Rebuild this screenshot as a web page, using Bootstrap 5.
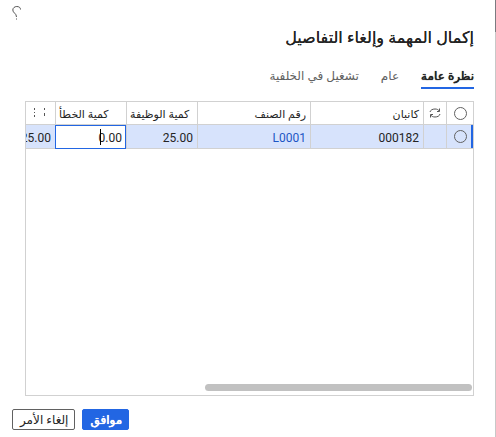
<!DOCTYPE html>
<html lang="ar" dir="rtl">
<head>
<meta charset="utf-8">
<meta name="viewport" content="width=device-width, initial-scale=1">
<title>إكمال المهمة وإلغاء التفاصيل</title>
<link href="https://cdn.jsdelivr.net/npm/bootstrap@5.3.0/dist/css/bootstrap.min.css" rel="stylesheet">
<style>
  body { font-family: "Open Sans", "DejaVu Sans", sans-serif; font-size: 12px; line-height: 16px; color: #242424; background: #fff; }
  .edge-dark { width: 1px; height: 32px; background: #7b7b80; }
  .edge-light { width: 1px; background: #c8c8c8; }
  .pane { padding: 4px 21px 7px 12px; }
  .help-btn { width: 10px; height: 16px; line-height: 0; }
  .pane-title { font-size: 16px; line-height: 24px; margin: 5px 0 0; font-weight: 400; text-shadow: 0 0 0 currentColor; }
  .tabs-row { gap: 22px; margin-top: 18px; padding: 0; }
  .tabs-row .nav-link { color: #616161; padding: 0 0 2px; border-bottom: 2px solid transparent; font-size: 12px; line-height: 18px; }
  .tabs-row .nav-link.active { color: #242424; text-shadow: 0 0 0 currentColor, 0 0 1px currentColor; border-color: #2266e3; }
  .grid-box { border: 1px solid #d1d1d1; margin: 12px 0 0 13px; padding-bottom: 4px; }
  .data-grid { table-layout: fixed; width: 100%; border-collapse: separate; border-spacing: 0; }
  .data-grid th, .data-grid td { height: 23px; padding: 0 4px; font-weight: 400; white-space: nowrap; overflow: hidden; border-bottom: 1px solid #d1d1d1; border-left: 1px solid #d1d1d1; text-align: start; vertical-align: middle; }
  .data-grid th { font-size: 11px; padding: 2px 4px 0 3px; }
  .data-grid th.num-head { text-align: end; }
  .data-grid td { height: 24px; padding-top: 2px; background: #d7e3fc; font-family: Roboto, "Open Sans", sans-serif; }
  .data-grid th:last-child, .data-grid td:last-child { border-left: 0; }
  .data-grid th:last-child { padding: 0 10px 0 0; }
  .data-grid td.picked { box-shadow: inset -2px 0 #2266e3; }
  .data-grid td:first-child, .data-grid th:first-child, .data-grid th:nth-child(2) { padding: 0 4px; text-align: center; line-height: 0; }
  .data-grid td.edit-cell { padding: 0; border: 0; }
  .edit-cell input { display: block; width: 100%; height: 24px; border: 1px solid #2266e3; border-radius: 0; padding: 1px 3px 0; color: #242424; background: #fff; font-size: 12px; outline: 0; }
  .caret { position: absolute; left: 45px; top: 4px; width: 1px; height: 16px; background: #000; }
  .pick { appearance: none; width: 13px; height: 13px; border: 1px solid #616161; border-radius: 50%; margin: 0; vertical-align: middle; background: transparent; }
  .item-link { color: #1d56c4; text-decoration: none; }
  .h-thumb { width: 267px; max-width: 100%; height: 7px; border-radius: 4px; background: #c1c1c1; margin-right: 1px; }
  .c-pick { width: 27px; } .c-sync { width: 23px; } .c-wide { width: 113px; } .c-num { width: 71px; }
  .foot { gap: 7px; margin-top: 13px; }
  .foot .btn { height: 21px; padding: 0 6px 0 7px; font-size: 12px; line-height: 19px; border-radius: 2px; }
  .foot .btn-ok { background: #2266e3; color: #fff; border-color: #2266e3; text-shadow: 0 0 0 currentColor, 0 0 1px currentColor; }
  .foot .btn-cancel { border-color: #616161; color: #242424; background: #fff; }
</style>
<script src="https://cdn.jsdelivr.net/npm/bootstrap@5.3.0/dist/js/bootstrap.bundle.min.js"></script>
</head>
<body>
<div class="d-flex min-vh-100">
  <div class="d-flex flex-column" aria-hidden="true"><div class="edge-dark"></div><div class="edge-light flex-grow-1"></div></div>
  <main class="pane d-flex flex-column flex-grow-1 overflow-hidden">
    <div class="d-flex justify-content-end">
      <button type="button" class="help-btn btn p-0 border-0" aria-label="تعليمات">
        <svg width="10" height="16" viewBox="0 0 10 16" fill="none" stroke="#555" stroke-width="1"><path d="M8.500 5.500C8.500 3.500 7 2.500 4.800 2.500S.8 4 .8 6c0 3 3.700 3.200 3.700 7M4.500 14.500v1"/></svg>
      </button>
    </div>
    <h1 class="pane-title">إكمال المهمة وإلغاء التفاصيل</h1>
    <nav class="nav tabs-row">
      <a class="nav-link active" href="#" aria-current="page">نظرة عامة</a>
      <a class="nav-link" href="#">عام</a>
      <a class="nav-link" href="#">تشغيل في الخلفية</a>
    </nav>
    <div class="grid-box d-flex flex-column flex-grow-1 overflow-hidden">
      <table class="data-grid">
        <colgroup><col class="c-pick"><col class="c-sync"><col class="c-wide"><col class="c-wide"><col class="c-num"><col class="c-num"><col></colgroup>
        <thead>
          <tr>
            <th><input class="pick" type="radio" name="all" aria-label="تحديد الكل"></th>
            <th><svg width="12" height="12" viewBox="0 0 12 12" fill="none" stroke="#555" stroke-width="1"><path d="M1 5C1.500 3 3.500 2 6 2c2 0 3.500.7 4.300 2M10.500 1.500v3H8M11 7c-.5 2-2.500 3-5 3-2 0-3.500-.7-4.300-2M1.500 10.500v-3H4"/></svg></th>
            <th>كانبان</th>
            <th>رقم الصنف</th>
            <th class="num-head">كمية الوظيفة</th>
            <th class="num-head">كمية الخطأ</th>
            <th><svg class="d-block" width="12" height="12" viewBox="0 0 12 12" fill="#555"><path d="M1 1h1v2H1zM1 5h1v1H1zM1 8h1v2H1zM11 1h1v2h-1zM11 6h1v1h-1zM11 7h1v2h-1z"/></svg></th>
          </tr>
        </thead>
        <tbody>
          <tr>
            <td class="picked"><input class="pick" type="radio" name="line" aria-label="تحديد السطر"></td>
            <td></td>
            <td>000182</td>
            <td><a class="item-link" href="#">L0001</a></td>
            <td>25.00</td>
            <td class="edit-cell"><div class="position-relative"><input type="text" value="0.00" aria-label="كمية الخطأ"><span class="caret"></span></div></td>
            <td>25.00</td>
          </tr>
        </tbody>
      </table>
      <div class="h-thumb mt-auto"></div>
    </div>
    <div class="foot d-flex justify-content-end">
      <button type="button" class="btn btn-ok">موافق</button>
      <button type="button" class="btn btn-cancel">إلغاء الأمر</button>
    </div>
  </main>
</div>
</body>
</html>
